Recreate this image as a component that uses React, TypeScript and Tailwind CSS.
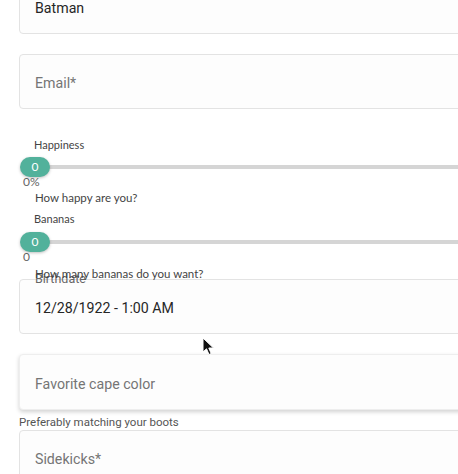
import React from "react";

const roboto = { fontFamily: "Roboto, 'Liberation Sans', sans-serif" };

function Field({ children, className = "" }: { children?: React.ReactNode; className?: string }) {
  return (
    <div
      className={
        "relative ml-[19px] w-[460px] h-[55px] shrink-0 rounded-[4px] border border-[#e3e3e3] bg-[#fdfdfd] flex items-center pl-[15px] pt-[5px] " +
        className
      }
    >
      {children}
    </div>
  );
}

function Slider() {
  return (
    <div className="relative h-[20px] shrink-0 ml-[20px] flex items-center">
      <div className="absolute left-[20px] right-0 top-[8px] h-[4px] bg-[#d5d5d5]" />
      <div className="relative z-10 w-[30px] h-[20px] rounded-full bg-[#52b19b] shadow-[0_1px_3px_rgba(0,0,0,0.25)] flex items-center justify-center text-white text-[12px] leading-none font-['Lato',sans-serif]">
        0
      </div>
    </div>
  );
}

export default function App() {
  return (
    <div className="relative w-[458px] h-[474px] overflow-hidden bg-white font-['Lato',sans-serif]">
      <div className="flex flex-col">
        <Field className="mt-[-21px]">
          <span className="text-[14.2px] text-[#262626]" style={roboto}>Batman</span>
        </Field>
        <Field className="mt-[20px]">
          <span className="text-[14.2px] text-[#757575]" style={roboto}>Email*</span>
        </Field>
        <div className="mt-[28px] h-[16px] leading-[16px] ml-[34px] text-[11px] text-[#444]">Happiness</div>
        <div className="mt-[4px]"><Slider /></div>
        <div className="mt-[-1px] h-[12px] leading-[12px] ml-[23px] text-[12px] text-[#666]">0%</div>
        <div className="mt-[2px] h-[16px] leading-[16px] ml-[35px] text-[11.5px] text-[#444]">How happy are you?</div>
        <div className="mt-[5px] h-[16px] leading-[16px] ml-[34px] text-[11px] text-[#444]">Bananas</div>
        <div className="mt-[5px]"><Slider /></div>
        <div className="mt-[-1px] h-[12px] leading-[12px] ml-[23px] text-[12px] text-[#666]">0</div>
        <div className="relative z-10 mt-[3px] h-[16px] leading-[16px] ml-[35px] text-[11.5px] text-[#444]">How many bananas do you want?</div>
        <Field className="mt-[-3px]">
          <span className="absolute left-[15px] top-[-8px] text-[12.5px] leading-[14px] text-[#666]" style={roboto}>Birthdate</span>
          <span className="text-[14.2px] text-[#262626]" style={roboto}>12/28/1922 - 1:00 AM</span>
        </Field>
        <Field className="mt-[20px] h-[56px] border-[#eeeeee] shadow-[0_2px_4px_rgba(0,0,0,0.18)]">
          <span className="text-[14.2px] text-[#757575]" style={roboto}>Favorite cape color</span>
        </Field>
        <div className="mt-[4px] h-[16px] leading-[16px] ml-[19px] text-[11.5px] text-[#555]" style={roboto}>Preferably matching your boots</div>
        <Field className="mt-0 h-[60px] items-start pt-[18px]">
          <span className="text-[14.2px] text-[#757575]" style={roboto}>Sidekicks*</span>
        </Field>
      </div>
      <svg className="absolute left-[202px] top-[337px]" width="14" height="20" viewBox="0 0 14 20">
        <path d="M1 1 L1 15 L4.5 11.8 L7 17.5 L9.2 16.5 L6.8 11 L11.5 11 Z" fill="#111" stroke="#fff" strokeWidth="1" />
      </svg>
    </div>
  );
}
